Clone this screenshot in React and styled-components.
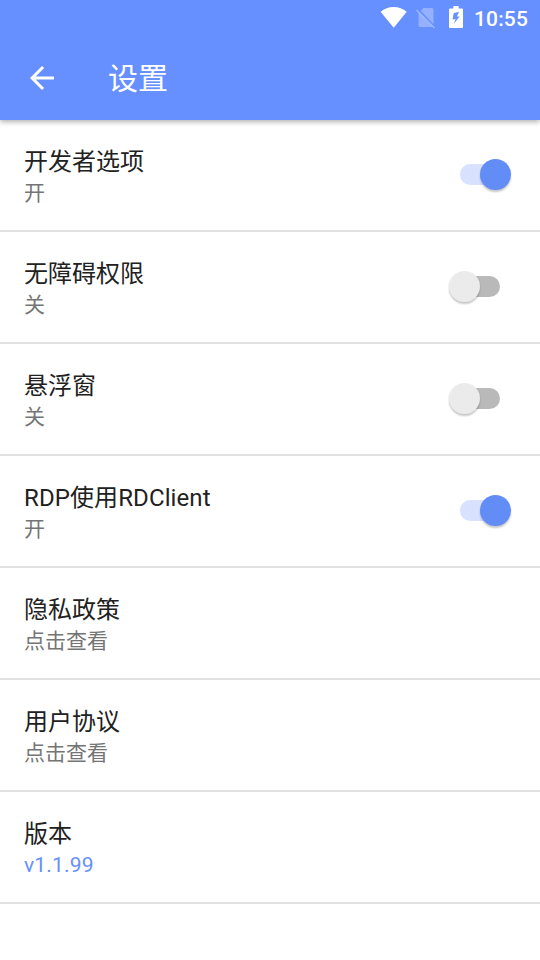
import React, { useState } from 'react';
// Vendor
import styled, { createGlobalStyle } from 'styled-components';

const GlobalStyle = createGlobalStyle`
  * {
    box-sizing: border-box;
  }
  body {
    margin: 0;
    background: #fff;
    font-family: Roboto, 'Noto Sans CJK SC', sans-serif;
  }
  p, h1 {
    margin: 0;
    font-weight: 400;
  }
`;

const Screen = styled.div`
  display: flex;
  flex-direction: column;
  width: 540px;
  height: 960px;
  overflow: hidden;
  background: #fff;
`;

const Header = styled.header`
  flex: none;
  height: 120px;
  background: #668fff;
  color: #fff;
  box-shadow: 0 2px 5px rgba(0, 0, 0, 0.3);
`;

const StatusBar = styled.div`
  display: flex;
  align-items: center;
  justify-content: flex-end;
  height: 36px;
  padding-right: 12px;

  svg {
    display: block;
    flex: none;
  }
`;

const Clock = styled.span`
  width: 54px;
  margin-left: 10px;
  padding-top: 2px;
  font-size: 21px;
  font-weight: 500;
  line-height: 36px;
  letter-spacing: 0.15px;
  white-space: nowrap;
`;

const Toolbar = styled.div`
  display: flex;
  align-items: center;
  height: 84px;
  padding-left: 24px;
`;

const BackButton = styled.button`
  width: 36px;
  height: 36px;
  margin-right: 48px;
  padding: 0;
  border: 0;
  background: none;
  color: inherit;

  svg {
    display: block;
  }
`;

const Title = styled.h1`
  padding-top: 2px;
  font-size: 30px;
  line-height: 40px;
`;

const List = styled.main`
  flex: 1;
`;

const Row = styled.div`
  display: flex;
  justify-content: space-between;
  height: 112px;
  padding: 26px 29px 0 24px;
  border-bottom: 2px solid #e0e0e0;
`;

const Name = styled.p`
  color: #212121;
  font-size: 24px;
  line-height: 32px;
  letter-spacing: ${(props) => (props.$latin ? '0.1px' : 'normal')};
`;

const Summary = styled.p`
  color: ${(props) => (props.$accent ? '#668fff' : '#757575')};
  font-size: 21px;
  line-height: 31px;
  letter-spacing: ${(props) => (props.$accent ? '0.2px' : 'normal')};
`;

const Track = styled.button`
  display: flex;
  align-items: center;
  width: 40px;
  height: 21px;
  margin: 18px 11px 0 0;
  padding: 0;
  border: 0;
  border-radius: 11px;
  background: ${(props) => (props.$on ? '#d8e2fe' : '#b9b9b9')};
`;

const Thumb = styled.span`
  flex: none;
  width: 31px;
  height: 31px;
  margin-left: ${(props) => (props.$on ? '20px' : '-11px')};
  border-radius: 50%;
  background: ${(props) => (props.$on ? '#628df7' : '#ebebeb')};
  box-shadow: 0 2px 2px rgba(0, 0, 0, 0.22);
`;

const settings = [
  { name: '开发者选项', on: true },
  { name: '无障碍权限', on: false },
  { name: '悬浮窗', on: false },
  { name: 'RDP使用RDClient', on: true, latin: true },
  { name: '隐私政策', summary: '点击查看' },
  { name: '用户协议', summary: '点击查看' },
  { name: '版本', summary: 'v1.1.99', accent: true },
];

// Status bar icons
function StatusIcons() {
  return (
    <svg width="84" height="36" viewBox="380 0 84 36" fill="#fff">
      <path d="M380.600 11.700C384.200 8.700 388.800 7 393.700 7s9.400 1.700 13 4.700L393.700 27.700z" />
      <path
        d="M423.500 8H432a1.500 1.500 0 0 1 1.500 1.500v14.700L420.800 10.700zM418.500 12.700L432.700 27H420a1.500 1.500 0 0 1-1.500-1.500z"
        opacity="0.3"
      />
      <path d="M416.500 10l18 18" stroke="#fff" strokeWidth="1.600" opacity="0.35" />
      <path
        fillRule="evenodd"
        d="M453.300 6h5.400v2.500h3.300a1 1 0 0 1 1 1V27a1 1 0 0 1-1 1h-12a1 1 0 0 1-1-1V9.500a1 1 0 0 1 1-1h3.300zM459 11.800l-5.300 1.400-1.200 6h3l-1.600 4.600 5.700-7.300h-2.700z"
      />
    </svg>
  );
}

function BackIcon() {
  return (
    <svg width="36" height="36" viewBox="0 0 24 24" fill="currentColor">
      <path d="M20 11H7.830l5.590-5.590L12 4l-8 8 8 8 1.410-1.410L7.830 13H20v-2z" />
    </svg>
  );
}

function SettingRow({ item }) {
  const [on, setOn] = useState(item.on);
  const hasSwitch = item.on !== undefined;

  return (
    <Row>
      <div>
        <Name $latin={item.latin}>{item.name}</Name>
        <Summary $accent={item.accent}>
          {hasSwitch ? (on ? '开' : '关') : item.summary}
        </Summary>
      </div>
      {hasSwitch && (
        <Track
          $on={on}
          role="switch"
          aria-checked={on}
          aria-label={item.name}
          onClick={() => setOn(!on)}
        >
          <Thumb $on={on} />
        </Track>
      )}
    </Row>
  );
}

// Component
function App() {
  return (
    <>
      <GlobalStyle />
      <Screen>
        <Header>
          <StatusBar>
            <StatusIcons />
            <Clock>10:55</Clock>
          </StatusBar>
          <Toolbar>
            <BackButton aria-label="返回">
              <BackIcon />
            </BackButton>
            <Title>设置</Title>
          </Toolbar>
        </Header>
        <List>
          {settings.map((item) => (
            <SettingRow key={item.name} item={item} />
          ))}
        </List>
      </Screen>
    </>
  );
}

export default App;
